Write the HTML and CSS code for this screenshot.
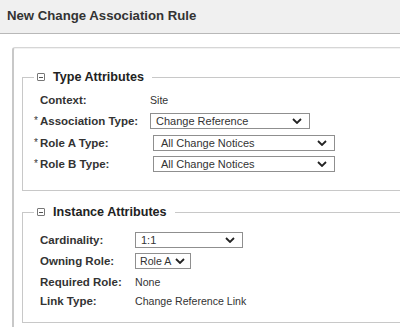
FILE: index.html
```html
<!DOCTYPE html>
<html lang="en">
<head>
  <meta charset="UTF-8" />
  <title>New Change Association Rule</title>
  <link rel="stylesheet" href="styles.css">
</head>
<body>
  <div class="header">New Change Association Rule</div>

  <div class="panel">
    <fieldset class="group group-type">
      <legend><span class="toggle"></span>Type Attributes</legend>
      <div class="row">
        <label>Context:</label>
        <span class="value">Site</span>
      </div>
      <div class="row">
        <label><span class="req">*</span>Association Type:</label>
        <div class="select w160"><span>Change Reference</span><svg viewBox="0 0 10 6" width="10" height="6"><path d="M1 1l4 4 4-4" fill="none" stroke="#222" stroke-width="1.8"/></svg></div>
      </div>
      <div class="row">
        <label><span class="req">*</span>Role A Type:</label>
        <div class="select w182 shift"><span>All Change Notices</span><svg viewBox="0 0 10 6" width="10" height="6"><path d="M1 1l4 4 4-4" fill="none" stroke="#222" stroke-width="1.8"/></svg></div>
      </div>
      <div class="row">
        <label><span class="req">*</span>Role B Type:</label>
        <div class="select w182 shift"><span>All Change Notices</span><svg viewBox="0 0 10 6" width="10" height="6"><path d="M1 1l4 4 4-4" fill="none" stroke="#222" stroke-width="1.8"/></svg></div>
      </div>
    </fieldset>

    <fieldset class="group group-inst">
      <legend><span class="toggle"></span>Instance Attributes</legend>
      <div class="row">
        <label>Cardinality:</label>
        <div class="select w108"><span>1:1</span><svg viewBox="0 0 10 6" width="10" height="6"><path d="M1 1l4 4 4-4" fill="none" stroke="#222" stroke-width="1.8"/></svg></div>
      </div>
      <div class="row">
        <label>Owning Role:</label>
        <div class="select w56 compact"><span>Role A</span><svg viewBox="0 0 10 6" width="10" height="6"><path d="M1 1l4 4 4-4" fill="none" stroke="#222" stroke-width="1.8"/></svg></div>
      </div>
      <div class="row short">
        <label>Required Role:</label>
        <span class="value">None</span>
      </div>
      <div class="row short">
        <label>Link Type:</label>
        <span class="value">Change Reference Link</span>
      </div>
    </fieldset>
  </div>
</body>
</html>
```

FILE: styles.css
```css
* {
  box-sizing: border-box;
}
body {
  margin: 0;
  overflow: hidden;
  background: #fff;
  color: #333;
  font-family: "Liberation Sans", Arial, sans-serif;
}
.header {
  height: 34px;
  display: flex;
  align-items: center;
  padding: 0 0 2px 7px;
  background: #f0f0f0;
  border-bottom: 1px solid #b8b8b8;
  font-size: 13.2px;
  font-weight: bold;
  color: #333;
}
.panel {
  width: 388px;
  margin: 13px 0 0 12px;
  padding: 22px 0 4px 8px;
  border: 1px solid #d6d6d6;
  border-left: 2px solid #c8c8c8;
  border-right: none;
  border-bottom: none;
  border-radius: 3px 0 0 0;
  box-shadow: inset 0 1px 0 #f2f2f2;
}
.group {
  margin: 0 -20px 0 0;
  padding: 5px 0 15px 11px;
  border: 1px solid #c8c8c8;
  border-right: none;
}
.group-inst {
  margin-top: 14px;
  padding-top: 10px;
  padding-bottom: 11px;
}
legend {
  padding: 0 8px 0 3px;
  font-size: 12.6px;
  font-weight: bold;
  color: #222;
  display: flex;
  align-items: center;
}
.toggle {
  width: 8px;
  height: 8px;
  margin-right: 8px;
  border: 1px solid #777;
  border-radius: 1px;
  position: relative;
}
.toggle::after {
  content: "";
  position: absolute;
  left: 1px;
  right: 1px;
  top: 2.5px;
  height: 1px;
  background: #555;
}
.row {
  display: grid;
  grid-template-columns: 116px auto;
  align-items: center;
  height: 21.5px;
  font-size: 11.5px;
  white-space: nowrap;
}
.group-inst .row {
  grid-template-columns: 101px auto;
}
.group-inst .row.short {
  height: 19.5px;
}
label {
  padding-left: 6px;
  font-weight: bold;
  color: #333;
}
.req {
  display: inline-block;
  width: 6px;
  margin-left: -6px;
  font-size: 10px;
  font-weight: normal;
  vertical-align: top;
}
.value {
  font-size: 10.6px;
  color: #333;
}
.select {
  height: 16px;
  display: flex;
  align-items: center;
  justify-content: space-between;
  padding: 0 7px 0 5px;
  border: 1px solid #8f8f8f;
  background: #fff;
  font-size: 11px;
  color: #333;
}
.select.shift {
  margin-left: 3px;
  padding-left: 7px;
}
.select.compact {
  padding: 0 5px 0 4px;
  font-size: 10.6px;
}
.w160 { width: 160px; }
.w182 { width: 182px; }
.w108 { width: 108px; }
.w56 { width: 56px; }
```
